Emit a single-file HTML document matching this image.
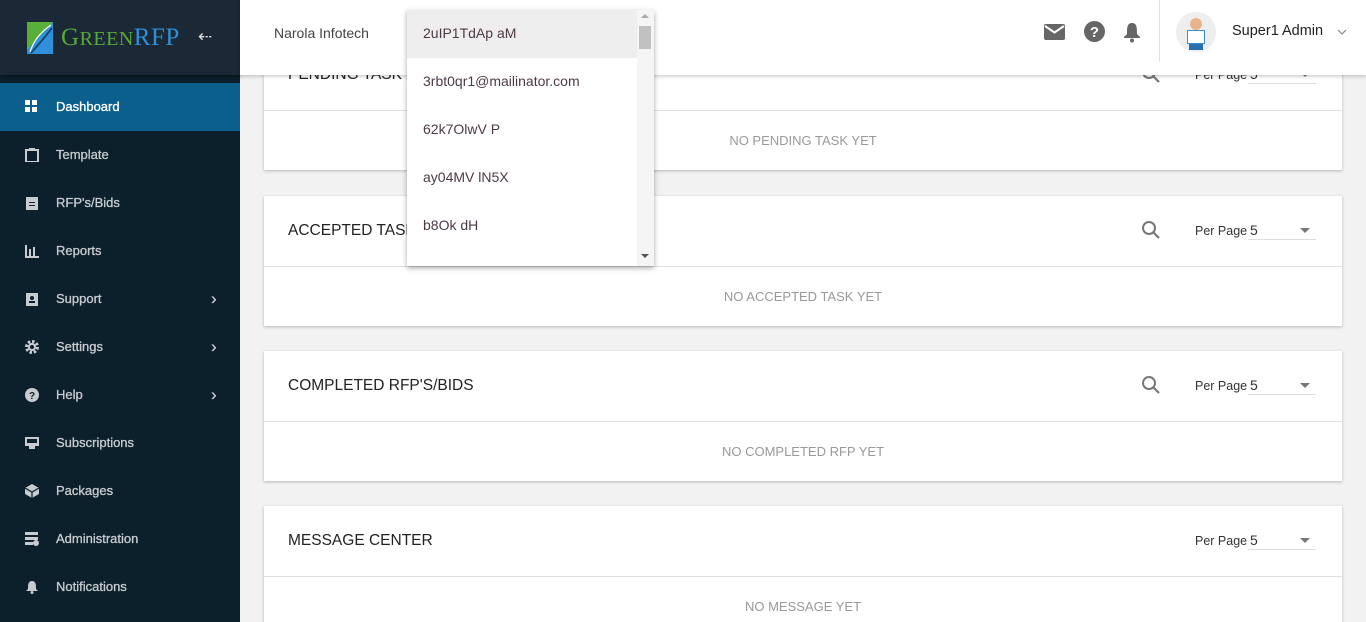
<!DOCTYPE html>
<html><head><meta charset="utf-8"><style>
*{box-sizing:border-box;margin:0;padding:0}
html{width:1366px;height:622px;overflow:hidden}
body{width:1366px;height:622px;overflow:hidden;background:#f2f2f2;font-family:"Liberation Sans",sans-serif;position:relative}
.sb{position:absolute;left:0;top:0;width:240px;height:622px;background:#0c202c}
.logo{position:absolute;left:0;top:0;width:240px;height:75px;background:#1a2935;box-shadow:0 2px 4px rgba(0,0,0,.4)}
.item{position:absolute;left:0;width:240px;height:48px;color:#c8ccd0;font-size:13px;line-height:48px;padding-left:56px;-webkit-text-stroke:0.3px #c8ccd0}
.item.act{background:#0a5f8c;color:#fff;-webkit-text-stroke:0.3px #fff}
.item svg{position:absolute;left:25px;top:17px}
.item .chev{position:absolute;left:211px;top:0;font-size:17px}
.hdr{position:absolute;left:240px;top:0;width:1126px;height:75px;background:#fff;box-shadow:0 1px 4px rgba(0,0,0,.25);z-index:2}
.card{position:absolute;left:264px;width:1078px;background:#fff;box-shadow:0 1px 3px rgba(0,0,0,.25)}
.ch{height:71px;border-bottom:1px solid #e0e0e0;position:relative}
.ch .t{position:absolute;left:24px;top:26px;font-size:15.5px;color:#222}
.pp{position:absolute;left:931px;top:28px;font-size:12.5px;color:#333}
.sel{position:absolute;left:984px;top:22px;width:68px;height:22px;border-bottom:1px solid #ddd;font-size:14px;color:#333;padding-left:2px;line-height:24px}
.sel:after{content:"";position:absolute;right:6px;top:10px;border:5px solid transparent;border-top:5px solid #777}
.srch{position:absolute;left:877px;top:24px}
.cb{height:59px;text-align:center;line-height:60px;font-size:13px;color:#999}
.dd{position:absolute;left:407px;top:10px;width:247px;height:256px;background:#fff;box-shadow:0 2px 5px rgba(0,0,0,.35);z-index:5;overflow:hidden}
.dd div.o{height:48px;line-height:46px;padding-left:16px;font-size:14px;color:#4d3a48;width:230px}
.dd .o.h{background:#eee}
.scr{position:absolute;right:0;top:0;width:17px;height:256px;background:#f5f5f5}
</style></head><body>
<div class="sb">
<div class="logo">
<svg style="position:absolute;left:27px;top:22px" width="26" height="32" viewBox="0 0 26 32"><rect width="26" height="32" fill="#2f8fd8"/><polygon points="0,0 26,0 0,28" fill="#5aae3a"/><path d="M3 30 Q8 14 24 3" stroke="#fff" stroke-width="1.2" fill="none"/><path d="M4 31 Q14 20 25 6" stroke="#0e3a60" stroke-width="1.5" fill="none"/></svg>
<div style="position:absolute;left:61px;top:24px;font-family:'Liberation Serif',serif;font-size:25px;letter-spacing:.5px"><span style="color:#58a83a">G<span style="font-size:20px">REEN</span></span><span style="color:#2f8fd8">RFP</span></div>
<div style="position:absolute;left:198px;top:27px;color:#ddd;font-size:17px">&#8672;</div>
</div>
<div class="item act" style="top:83px"><svg width="12" height="12"><rect x="0" y="0" width="5" height="5" fill="#fff"/><rect x="7" y="0" width="5" height="5" fill="#fff"/><rect x="0" y="7" width="5" height="5" fill="#fff"/><rect x="7" y="7" width="5" height="5" fill="#fff"/></svg>Dashboard</div>
<div class="item" style="top:131px"><svg width="14" height="14"><rect x="1" y="2" width="12" height="12" fill="none" stroke="#c8ccd0" stroke-width="2"/><rect x="4" y="0" width="6" height="3" fill="#c8ccd0"/></svg>Template</div>
<div class="item" style="top:179px"><svg width="14" height="14"><rect x="1" y="1" width="12" height="13" fill="#c8ccd0"/><rect x="4" y="6" width="6" height="1" fill="#0c202c"/><rect x="4" y="9" width="6" height="1" fill="#0c202c"/></svg>RFP's/Bids</div>
<div class="item" style="top:227px"><svg width="14" height="14"><rect x="0" y="1" width="2" height="12" fill="#c8ccd0"/><rect x="4" y="5" width="2" height="8" fill="#c8ccd0"/><rect x="8" y="3" width="2" height="10" fill="#c8ccd0"/><rect x="0" y="12" width="14" height="2" fill="#c8ccd0"/></svg>Reports</div>
<div class="item" style="top:275px"><svg width="14" height="14"><rect x="1" y="1" width="12" height="13" fill="#c8ccd0"/><circle cx="7" cy="6" r="2" fill="#0c202c"/><rect x="4" y="9" width="6" height="2" fill="#0c202c"/></svg>Support<span class="chev">&#8250;</span></div>
<div class="item" style="top:323px"><svg width="14" height="14"><circle cx="7" cy="7" r="5.5" fill="none" stroke="#c8ccd0" stroke-width="3" stroke-dasharray="2.5 1.8"/><circle cx="7" cy="7" r="4" fill="#c8ccd0"/><circle cx="7" cy="7" r="2" fill="#0c202c"/></svg>Settings<span class="chev">&#8250;</span></div>
<div class="item" style="top:371px"><svg width="14" height="14"><circle cx="7" cy="7" r="7" fill="#c8ccd0"/><text x="7" y="11" font-size="10" font-weight="bold" text-anchor="middle" fill="#0c202c" font-family="Liberation Sans">?</text></svg>Help<span class="chev">&#8250;</span></div>
<div class="item" style="top:419px"><svg width="14" height="14"><rect x="0" y="1" width="14" height="9" fill="#c8ccd0"/><rect x="2" y="3" width="10" height="4" fill="#0c202c"/><rect x="4" y="10" width="6" height="3" fill="#c8ccd0"/></svg>Subscriptions</div>
<div class="item" style="top:467px"><svg width="14" height="14"><polygon points="7,0 14,4 14,10 7,14 0,10 0,4" fill="#c8ccd0"/><path d="M0 4 L7 8 L14 4 M7 8 V14" stroke="#0c202c" stroke-width="1.2" fill="none"/></svg>Packages</div>
<div class="item" style="top:515px"><svg width="14" height="14"><rect x="0" y="0" width="13" height="3" fill="#c8ccd0"/><rect x="0" y="5" width="13" height="3" fill="#c8ccd0"/><rect x="0" y="10" width="8" height="3" fill="#c8ccd0"/><circle cx="11" cy="11" r="3" fill="#c8ccd0"/></svg>Administration</div>
<div class="item" style="top:563px"><svg width="14" height="14"><path d="M7 1 C3 1 3 5 3 9 L1 11 H13 L11 9 C11 5 11 1 7 1Z" fill="#c8ccd0"/><circle cx="7" cy="12.5" r="1.5" fill="#c8ccd0"/></svg>Notifications</div>
</div>
<div class="hdr">
<div style="position:absolute;left:34px;top:25px;font-size:14px;color:#444">Narola Infotech</div>
<svg style="position:absolute;left:804px;top:24px" width="21" height="16" viewBox="0 0 21 16"><rect width="21" height="16" rx="2" fill="#666"/><path d="M1 2 L10.5 8.5 L20 2" stroke="#fff" stroke-width="2" fill="none"/></svg>
<svg style="position:absolute;left:844px;top:21px" width="21" height="21"><circle cx="10.5" cy="10.5" r="10.5" fill="#666"/><text x="10.5" y="16" font-size="15" font-weight="bold" text-anchor="middle" fill="#fff" font-family="Liberation Sans">?</text></svg>
<svg style="position:absolute;left:883px;top:21px" width="18" height="22"><path d="M9 2 C4 2 4 7 4 13 L1 16 V17 H17 V16 L14 13 C14 7 14 2 9 2Z" fill="#666"/><circle cx="9" cy="19.5" r="2" fill="#666"/></svg>
<div style="position:absolute;left:919px;top:0;width:1px;height:62px;background:#e0e0e0"></div>
<div style="position:absolute;left:936px;top:12px;width:40px;height:40px;border-radius:50%;background:#eee;overflow:hidden"><div style="position:absolute;left:14px;top:6px;width:12px;height:12px;border-radius:50%;background:#e8b58a"></div><div style="position:absolute;left:11px;top:18px;width:18px;height:14px;background:#fff;border:1px solid #3a8ed0"></div><div style="position:absolute;left:13px;top:32px;width:14px;height:6px;background:#2a6fb0"></div></div>
<div style="position:absolute;left:992px;top:23px;font-size:14.5px;color:#222">Super1 Admin</div>
<svg style="position:absolute;left:1097px;top:29px" width="10" height="6"><path d="M1 1 L5 5 L9 1" stroke="#888" stroke-width="1.2" fill="none"/></svg>
</div>
<div class="card" style="top:40px"><div class="ch"><div class="t">PENDING TASK LIST</div><svg class="srch" width="20" height="20"><circle cx="8" cy="8" r="6" fill="none" stroke="#777" stroke-width="2"/><path d="M12.5 12.5 L18 18" stroke="#777" stroke-width="2.2"/></svg><div class="pp">Per Page</div><div class="sel">5</div></div><div class="cb">NO PENDING TASK YET</div></div>
<div class="card" style="top:196px"><div class="ch"><div class="t">ACCEPTED TASK LIST</div><svg class="srch" width="20" height="20"><circle cx="8" cy="8" r="6" fill="none" stroke="#777" stroke-width="2"/><path d="M12.5 12.5 L18 18" stroke="#777" stroke-width="2.2"/></svg><div class="pp">Per Page</div><div class="sel">5</div></div><div class="cb">NO ACCEPTED TASK YET</div></div>
<div class="card" style="top:351px"><div class="ch"><div class="t">COMPLETED RFP'S/BIDS</div><svg class="srch" width="20" height="20"><circle cx="8" cy="8" r="6" fill="none" stroke="#777" stroke-width="2"/><path d="M12.5 12.5 L18 18" stroke="#777" stroke-width="2.2"/></svg><div class="pp">Per Page</div><div class="sel">5</div></div><div class="cb">NO COMPLETED RFP YET</div></div>
<div class="card" style="top:506px"><div class="ch"><div class="t">MESSAGE CENTER</div><div class="pp">Per Page</div><div class="sel">5</div></div><div class="cb">NO MESSAGE YET</div></div>
<div class="dd">
<div class="o h">2uIP1TdAp aM</div><div class="o">3rbt0qr1@mailinator.com</div><div class="o">62k7OlwV P</div><div class="o">ay04MV lN5X</div><div class="o">b8Ok dH</div>
<div class="scr"><div style="position:absolute;left:4px;top:4px;border:4px solid transparent;border-bottom:4px solid #aaa;border-top:0"></div><div style="position:absolute;left:2px;top:16px;width:12px;height:23px;background:#c1c1c1"></div><div style="position:absolute;left:4px;top:244px;border:4px solid transparent;border-top:4px solid #555;border-bottom:0"></div></div>
</div>
</body></html>
